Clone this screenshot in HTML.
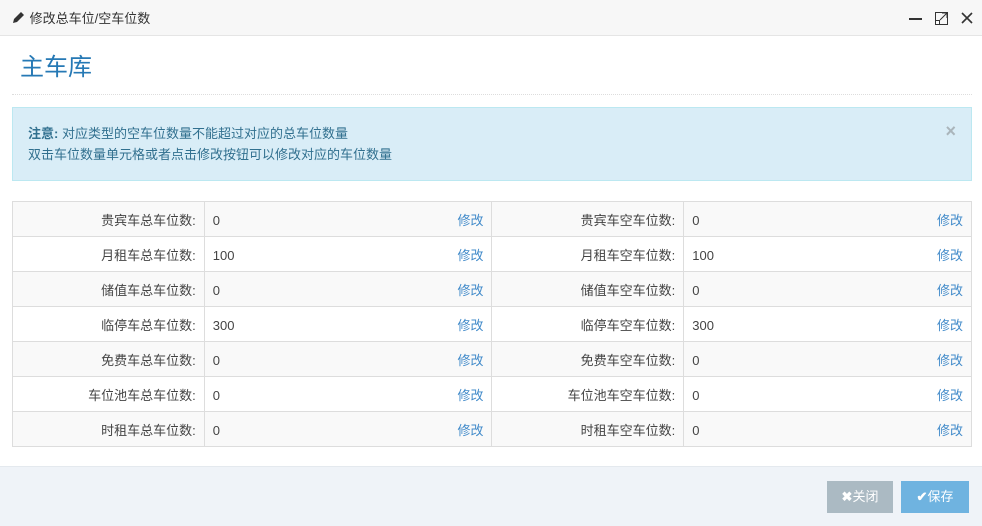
<!DOCTYPE html>
<html><head><meta charset="utf-8"><style>
*{box-sizing:border-box;margin:0;padding:0}
body{width:982px;height:526px;background:#fff;font-family:"Liberation Sans","Noto Sans CJK SC",sans-serif;font-size:13px;color:#393939;position:relative;overflow:hidden}
.hd{position:absolute;left:0;top:0;width:982px;height:36px;background:#f7f7f7;border-bottom:1px solid #e5e5e5}
.hd .t{position:absolute;left:12px;top:8px;font-size:13px;color:#333}
.title{position:absolute;left:20px;top:47px;font-size:24px;color:#2679b5}
.hr{position:absolute;left:12px;top:94px;width:960px;border-top:1px dotted #ddd}
.alert{position:absolute;left:12px;top:107px;width:960px;height:74px;background:#d9edf7;border:1px solid #bce8f1;color:#31708f;padding:15px 0 0 15px;line-height:21px}
.alert .x{position:absolute;right:15px;top:13px;color:#aab5bb;font-size:18px;font-weight:bold}
table{position:absolute;left:12px;top:201px;width:960px;border-collapse:collapse}
td{border:1px solid #ddd;height:35px;padding:0 8px;color:#444;vertical-align:middle}
tr:nth-child(odd) td{background:#f9f9f9}
td.l{width:192px;text-align:right}
td.v{width:288px}
td.v div{display:flex;justify-content:space-between;align-items:baseline}
td.v a{color:#428bca;text-decoration:none}
.ft{position:absolute;left:0;top:466px;width:982px;height:60px;background:#eff3f8;border-top:1px solid #e4e9ee}
.btn{position:absolute;top:14px;height:32px;color:#fff;font-size:13px;line-height:32px;text-align:center}
</style></head><body>
<div class="hd"><div class="t"><svg width="14" height="13" viewBox="0 0 14 13" style="vertical-align:-1px"><path d="M1 12 L2 8 L9 1 L12 4 L5 11 Z" fill="#333"/></svg> 修改总车位/空车位数</div>
<svg style="position:absolute;left:907px;top:10px" width="66" height="16"><line x1="2" y1="9" x2="15" y2="9" stroke="#333" stroke-width="2"/><rect x="28.5" y="2.5" width="12" height="12" fill="none" stroke="#333"/><path d="M33 10 L40 3 M35 3 H40 V8" stroke="#333" fill="none"/><rect x="28.5" y="10.5" width="4" height="4" fill="#fff" stroke="#333"/><path d="M55 3 L65 13 M65 3 L55 13" stroke="#333" stroke-width="1.6"/></svg>
</div>
<div class="title">主车库</div>
<div class="hr"></div>
<div class="alert"><b>注意:</b> 对应类型的空车位数量不能超过对应的总车位数量<br>双击车位数量单元格或者点击修改按钮可以修改对应的车位数量<span class="x">×</span></div>
<table>
<tr><td class="l">贵宾车总车位数:</td><td class="v"><div><span>0</span><a>修改</a></div></td><td class="l">贵宾车空车位数:</td><td class="v"><div><span>0</span><a>修改</a></div></td></tr>
<tr><td class="l">月租车总车位数:</td><td class="v"><div><span>100</span><a>修改</a></div></td><td class="l">月租车空车位数:</td><td class="v"><div><span>100</span><a>修改</a></div></td></tr>
<tr><td class="l">储值车总车位数:</td><td class="v"><div><span>0</span><a>修改</a></div></td><td class="l">储值车空车位数:</td><td class="v"><div><span>0</span><a>修改</a></div></td></tr>
<tr><td class="l">临停车总车位数:</td><td class="v"><div><span>300</span><a>修改</a></div></td><td class="l">临停车空车位数:</td><td class="v"><div><span>300</span><a>修改</a></div></td></tr>
<tr><td class="l">免费车总车位数:</td><td class="v"><div><span>0</span><a>修改</a></div></td><td class="l">免费车空车位数:</td><td class="v"><div><span>0</span><a>修改</a></div></td></tr>
<tr><td class="l">车位池车总车位数:</td><td class="v"><div><span>0</span><a>修改</a></div></td><td class="l">车位池车空车位数:</td><td class="v"><div><span>0</span><a>修改</a></div></td></tr>
<tr><td class="l">时租车总车位数:</td><td class="v"><div><span>0</span><a>修改</a></div></td><td class="l">时租车空车位数:</td><td class="v"><div><span>0</span><a>修改</a></div></td></tr>
</table>
<div class="ft">
<div class="btn" style="left:827px;width:66px;background:#abbac3"><b>✖</b>关闭</div>
<div class="btn" style="left:901px;width:68px;background:#6fb3e0"><b>✔</b>保存</div>
</div>
</body></html>
